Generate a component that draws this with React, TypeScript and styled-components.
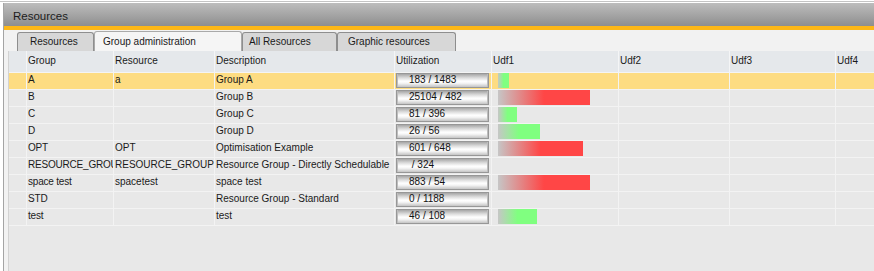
import React from "react";
import styled, { createGlobalStyle, css } from "styled-components";

const GlobalStyle = createGlobalStyle`
  html, body { margin: 0; padding: 0; background: #ffffff; }
  body { font-family: "Liberation Sans", Arial, sans-serif; color: #1a1a1a; }
  * { box-sizing: border-box; }
`;

const COLS = "18px 87px 101px 180px 97px 127px 111px 106px 130px";

const Page = styled.div`
  width: 874px;
  height: 271px;
  overflow: hidden;
  padding-top: 1px;
  display: flex;
  flex-direction: column;
  background: #ffffff;
`;

const TopRule = styled.div`
  height: 1px;
  background: #c4c4c4;
  margin-bottom: 1px;
  flex: none;
`;

const Window = styled.div`
  flex: 1;
  margin-left: 3px;
  border-left: 1px solid #a4a4a4;
  display: flex;
  flex-direction: column;
  min-height: 0;
`;

const TitleBar = styled.div`
  height: 27px;
  flex: none;
  padding: 4px 0 0 9px;
  background: linear-gradient(#bdbdbd, #8e8e8e);
  border-bottom: 4px solid #fdb717;
  font-size: 11.5px;
  line-height: 19px;
  color: #1c1c1c;
`;

const Body = styled.div`
  flex: 1;
  background: #f2f2f2;
  padding-left: 4px;
  display: flex;
  flex-direction: column;
  min-height: 0;
`;

const TabStrip = styled.div`
  height: 21px;
  flex: none;
  padding-left: 9px;
  display: flex;
  align-items: flex-end;
`;

const Tab = styled.div<{ $active?: boolean; $w: number; $pad: number }>`
  width: ${(p) => p.$w}px;
  padding-left: ${(p) => p.$pad}px;
  font-size: 10px;
  line-height: 13px;
  white-space: nowrap;
  border: 1px solid #8e8e8e;
  border-bottom: none;
  border-radius: 3px 3px 0 0;
  color: #1a1a1a;
  ${(p) =>
    p.$active
      ? css`
          height: 20px;
          padding-top: 3px;
          background: #f5f5f5;
          border-color: #a9a9a9;
        `
      : css`
          height: 19px;
          padding-top: 2px;
          background: #d7d7d7;
        `}
`;

const Grid = styled.div`
  flex: 1;
  background: #e8e8e8;
  border-left: 1px solid #d2d2d2;
  min-height: 0;
  overflow: hidden;
`;

const HeaderRow = styled.div`
  display: grid;
  grid-template-columns: ${COLS};
  height: 22px;
  background: #e5e8eb;
  border-bottom: 1px solid #f4f4f4;
`;

const HeaderCell = styled.div`
  border-right: 1px solid #f4f5f6;
  padding: 3px 0 0 1px;
  font-size: 10px;
  line-height: 13px;
  white-space: nowrap;
  overflow: hidden;
`;

const Row = styled.div<{ $selected?: boolean }>`
  display: grid;
  grid-template-columns: ${COLS};
  height: 17px;
  border-bottom: 1px solid #f3f3f3;
  background: ${(p) => (p.$selected ? "#fddc82" : "#e8e8e8")};
`;

const Cell = styled.div`
  height: 16px;
  border-right: 1px solid #f3f3f3;
  padding-left: 1px;
  font-size: 10px;
  line-height: 13px;
  white-space: nowrap;
  overflow: hidden;
`;

const GroupCell = styled(Cell)`
  letter-spacing: -0.2px;
`;

const UtilCell = styled(Cell)`
  padding-left: 1px;
`;

const UtilBox = styled.div`
  width: 93px;
  height: 15px;
  border: 1px solid #979797;
  padding-left: 12px;
  background: linear-gradient(#a6a6a6 0%, #dcdcdc 30%, #ffffff 55%, #f6f6f6 70%, #c4c4c4 100%);
  box-shadow: inset 1px 0 0 #bdbdbd, inset -1px 0 0 #bdbdbd;
  font-size: 10px;
  line-height: 11px;
  color: #111;
  white-space: pre;
`;

const BarCell = styled(Cell)`
  padding-left: 6px;
`;

const Bar = styled.div<{ $tone: "green" | "red" }>`
  height: 15px;
  background: ${(p) =>
    p.$tone === "green"
      ? "linear-gradient(to right, #c6c6c6 0%, #80ff80 50%, #80ff80 100%)"
      : "linear-gradient(to right, #c6c6c6 0%, #ff4646 50%, #ff4646 100%)"};
`;

type RowData = {
  group: string;
  resource: string;
  description: string;
  util: string;
  bar: number;
  tone: "green" | "red";
  selected?: boolean;
};

const rows: RowData[] = [
  { group: "A", resource: "a", description: "Group A", util: "183 / 1483", bar: 11, tone: "green", selected: true },
  { group: "B", resource: "", description: "Group B", util: "25104 / 482", bar: 92, tone: "red" },
  { group: "C", resource: "", description: "Group C", util: "81 / 396", bar: 19, tone: "green" },
  { group: "D", resource: "", description: "Group D", util: "26 / 56", bar: 42, tone: "green" },
  { group: "OPT", resource: "OPT", description: "Optimisation Example", util: "601 / 648", bar: 85, tone: "red" },
  { group: "RESOURCE_GROUP", resource: "RESOURCE_GROUP", description: "Resource Group - Directly Schedulable", util: " / 324", bar: 0, tone: "green" },
  { group: "space test", resource: "spacetest", description: "space test", util: "883 / 54", bar: 92, tone: "red" },
  { group: "STD", resource: "", description: "Resource Group - Standard", util: "0 / 1188", bar: 0, tone: "green" },
  { group: "test", resource: "", description: "test", util: "46 / 108", bar: 39, tone: "green" },
];

const headers = ["", "Group", "Resource", "Description", "Utilization", "Udf1", "Udf2", "Udf3", "Udf4"];

const tabs = [
  { label: "Resources", w: 77, pad: 12 },
  { label: "Group administration", w: 148, pad: 8, active: true },
  { label: "All Resources", w: 95, pad: 6 },
  { label: "Graphic resources", w: 119, pad: 10 },
];

export default function App() {
  return (
    <>
      <GlobalStyle />
      <Page>
        <TopRule />
        <Window>
          <TitleBar>Resources</TitleBar>
          <Body>
            <TabStrip>
              {tabs.map((t) => (
                <Tab key={t.label} $active={t.active} $w={t.w} $pad={t.pad}>
                  {t.label}
                </Tab>
              ))}
            </TabStrip>
            <Grid>
              <HeaderRow>
                {headers.map((h, i) => (
                  <HeaderCell key={i}>{h}</HeaderCell>
                ))}
              </HeaderRow>
              {rows.map((r) => (
                <Row key={r.group} $selected={r.selected}>
                  <Cell />
                  <GroupCell>{r.group}</GroupCell>
                  <Cell>{r.resource}</Cell>
                  <Cell>{r.description}</Cell>
                  <UtilCell>
                    <UtilBox>{r.util}</UtilBox>
                  </UtilCell>
                  <BarCell>
                    {r.bar > 0 && <Bar $tone={r.tone} style={{ width: r.bar }} />}
                  </BarCell>
                  <Cell />
                  <Cell />
                  <Cell />
                </Row>
              ))}
            </Grid>
          </Body>
        </Window>
      </Page>
    </>
  );
}
